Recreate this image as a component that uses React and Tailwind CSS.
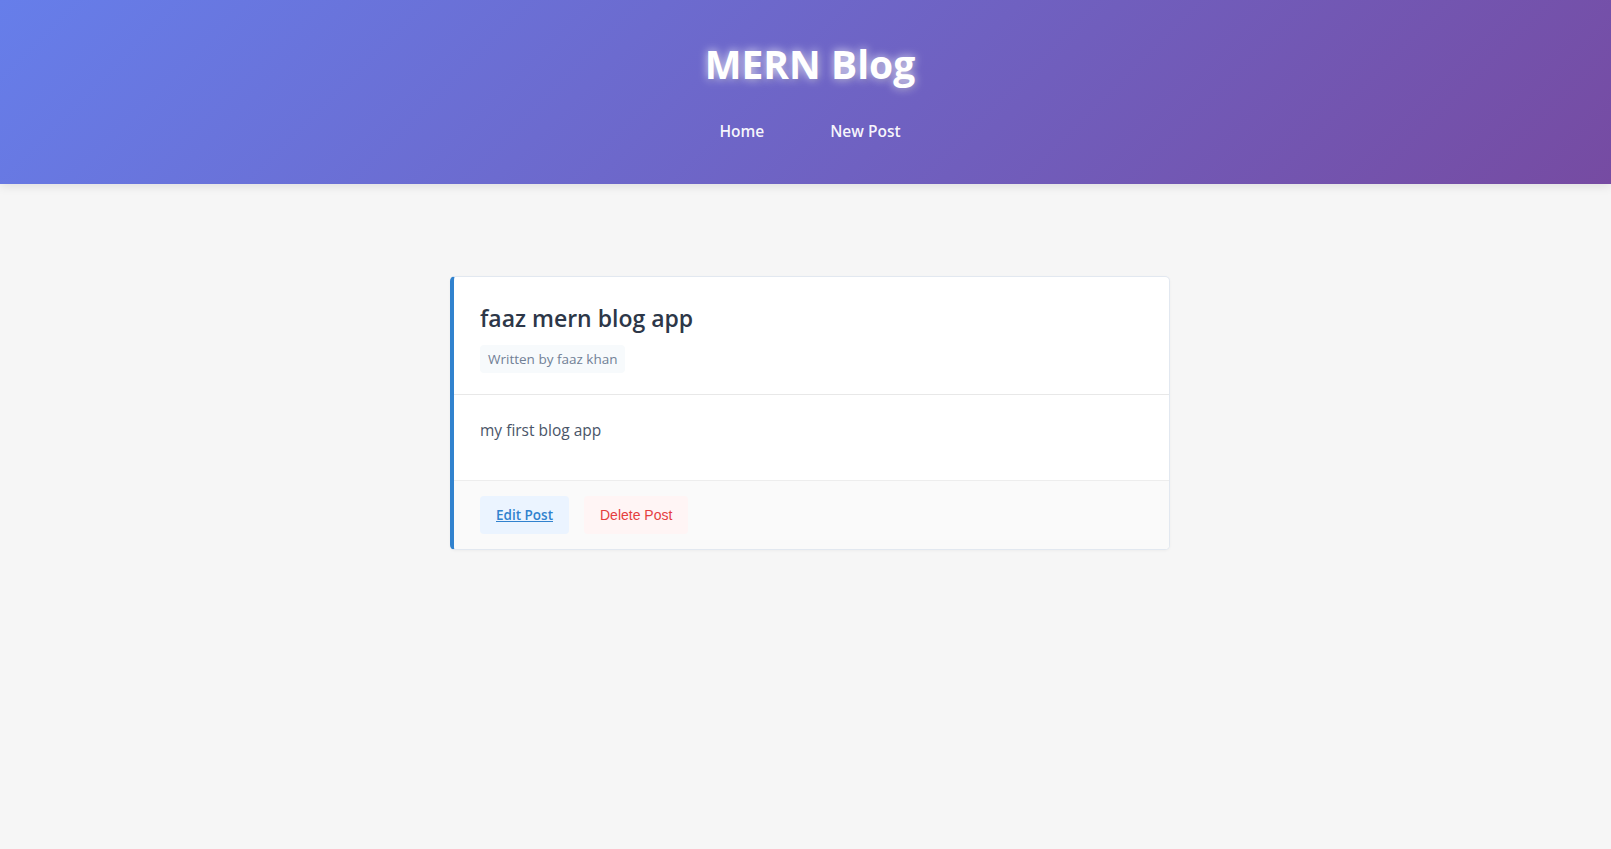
const posts = [
  {
    id: 1,
    title: "faaz mern blog app",
    author: "faaz khan",
    content: "my first blog app",
  },
];

const Header = () => {
  return (
    <header className="h-[184px] bg-[linear-gradient(135deg,#667eea_0%,#764ba2_100%)] shadow-[0_2px_10px_rgba(0,0,0,0.1)] pl-[9px] flex flex-col items-center">
      <h1 className="mt-[40px] text-[39px] leading-[48px] font-bold text-white [text-shadow:0_0_10px_rgba(255,255,255,0.8),2px_2px_4px_rgba(0,0,0,0.1)]">
        MERN Blog
      </h1>
      <nav className="mt-[24px] flex gap-[66px]">
        <a href="#" className="text-white/95 text-[15.5px] font-semibold leading-[38px]">
          Home
        </a>
        <a href="#" className="text-white/95 text-[15.5px] font-semibold leading-[38px]">
          New Post
        </a>
      </nav>
    </header>
  );
};

const PostCard = ({ post }) => {
  return (
    <div className="w-[720px] bg-white border border-[#e2e8f0] border-l-4 border-l-[#3182ce] rounded-[5px] shadow-[0_1px_3px_rgba(0,0,0,0.04)] overflow-hidden">
      <div className="px-[26px] pt-[26px] pb-[21px] border-b border-[#e8e8e8]">
        <h2 className="text-[23px] leading-[30px] font-semibold text-[#2d3748]">{post.title}</h2>
        <div className="mt-[12px]">
          <span className="inline-block bg-[#f7fafc] text-[#718096] text-[13.5px] leading-[28px] px-[8px] rounded-[4px]">
            Written by {post.author}
          </span>
        </div>
      </div>
      <div className="px-[26px] pt-[22px] pb-[37px]">
        <p className="text-[15.5px] leading-[26px] text-[#4a5568]">{post.content}</p>
      </div>
      <div className="px-[26px] py-[15px] bg-[#fafafa] border-t border-[#ededed] flex gap-[15px]">
        <a
          href="#"
          className="h-[38px] px-[16px] flex items-center bg-[#ebf4ff] text-[#3182ce] text-[13.5px] font-semibold underline rounded-[4px]"
        >
          Edit Post
        </a>
        <button className="h-[38px] px-[16px] bg-[#fff5f5] text-[#e53e3e] text-[14px] rounded-[4px] [font-family:'Liberation_Sans',Arial,sans-serif]">
          Delete Post
        </button>
      </div>
    </div>
  );
};

export default function App() {
  return (
    <div className="min-h-[849px] bg-[#f6f6f6] [font-family:'Open_Sans','Noto_Sans',sans-serif]">
      <Header />
      <main className="pt-[92px] pl-[9px] flex flex-col items-center gap-6">
        {posts.map((post) => (
          <PostCard key={post.id} post={post} />
        ))}
      </main>
    </div>
  );
}
